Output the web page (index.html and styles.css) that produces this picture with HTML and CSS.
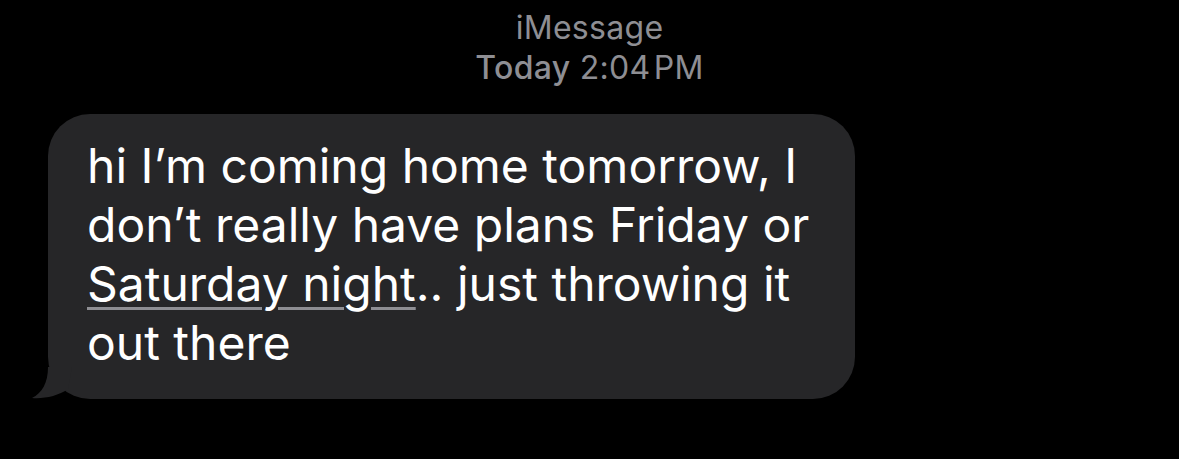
FILE: index.html
```html
<!DOCTYPE html>
<html>
<head>
<meta charset="utf-8">
<link rel="stylesheet" href="styles.css">
</head>
<body>
<div class="screen">
  <header class="meta">
    <div class="service">iMessage</div>
    <div class="time"><span class="day">Today</span> 2:04&#8202;PM</div>
  </header>
  <div class="row">
    <div class="bubble">
      <p class="text">hi I’m coming home tomorrow, I don’t really have plans Friday or <span class="link">Saturday night</span>.. just throwing it out there</p>
      <svg class="tail" width="40" height="32" viewBox="0 0 40 32"><path d="M16 0 C16 16 10 26 0 31 C12 32 26 29 36 22 L40 0 Z" fill="#262628"/></svg>
    </div>
  </div>
</div>
</body>
</html>
```
FILE: styles.css
```css
html, body {
  margin: 0;
  padding: 0;
  background: #000;
}
.screen {
  width: 1179px;
  height: 459px;
  background: #000;
  font-family: Inter, "Liberation Sans", sans-serif;
  overflow: hidden;
}
.meta {
  padding-top: 8px;
  text-align: center;
  color: #8e8e93;
  font-size: 32px;
  line-height: 40px;
  letter-spacing: 0.3px;
}
.day {
  font-weight: 500;
}
.row {
  padding-left: 48px;
  padding-top: 26px;
}
.bubble {
  position: relative;
  width: 807px;
  box-sizing: border-box;
  background: #262628;
  border-radius: 42px;
  padding: 22px 40px 27px 39px;
}
.text {
  margin: 0;
  color: #fff;
  font-size: 48px;
  line-height: 59px;
  letter-spacing: 0;
}
.link {
  text-decoration: underline;
  text-decoration-color: #8e8e93;
  text-decoration-thickness: 3px;
  text-underline-offset: 6px;
  text-decoration-skip-ink: auto;
}
.tail {
  position: absolute;
  left: -16px;
  bottom: 0;
}
```
